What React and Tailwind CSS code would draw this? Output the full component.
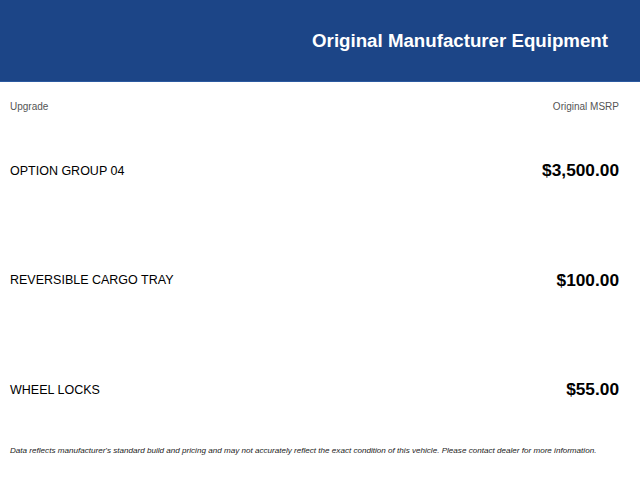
import React from 'react';

const items = [
  { name: 'OPTION GROUP 04', price: '$3,500.00' },
  { name: 'REVERSIBLE CARGO TRAY', price: '$100.00' },
  { name: 'WHEEL LOCKS', price: '$55.00' },
];

const App = () => {
  return (
    <div className="w-[640px] h-[480px] bg-white overflow-hidden font-['Liberation_Sans',Arial,sans-serif]">
      <div className="h-[82px] bg-[#1c4587] border-b border-[#2c5aa0] flex items-center justify-end pr-[32px] pt-[2px]">
        <h1 className="text-white text-[18.7px] font-bold leading-none">Original Manufacturer Equipment</h1>
      </div>

      <div className="flex justify-between px-[10px] pr-[21px] pt-[17px] text-[10px] leading-[16px] text-[#555]">
        <span>Upgrade</span>
        <span>Original MSRP</span>
      </div>

      <div className="flex flex-col gap-[85.5px] mt-[44px] pl-[10px] pr-[21px]">
        {items.map((item) => (
          <div key={item.name} className="flex justify-between items-center h-[24px]">
            <span className="text-[12.5px] text-black">{item.name}</span>
            <span className="text-[17.3px] font-bold text-black">{item.price}</span>
          </div>
        ))}
      </div>

      <p className="mt-[44px] pl-[10px] text-[8.1px] leading-[10px] italic text-[#222]">
        Data reflects manufacturer's standard build and pricing and may not accurately reflect the exact condition of this vehicle. Please contact dealer for more information.
      </p>
    </div>
  );
};

export default App;
